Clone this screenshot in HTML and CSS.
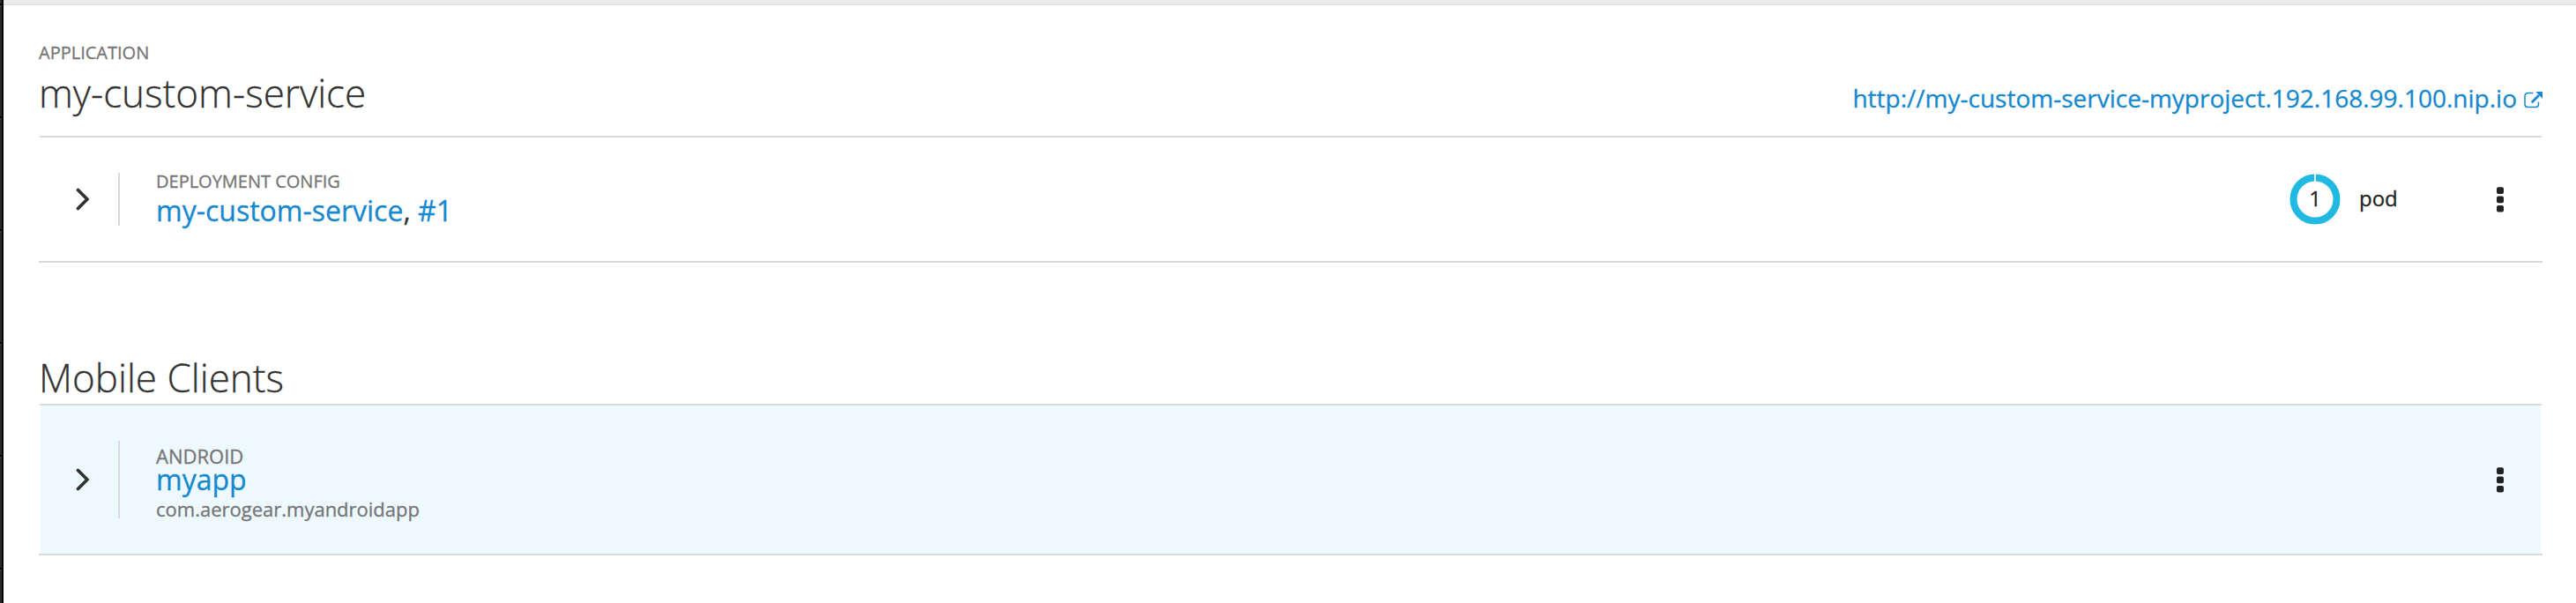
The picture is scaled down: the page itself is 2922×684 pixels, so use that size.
FILE: index.html
```html
<!DOCTYPE html>
<html lang="en">
<head>
<meta charset="utf-8">
<title>Overview</title>
<link rel="stylesheet" href="styles.css">
</head>
<body>
<div class="shell">
  <nav class="rail"></nav>
  <div class="page">
    <div class="topbar"></div>
    <main class="content">
      <header class="app-header">
        <div class="app-name">
          <div class="label">APPLICATION</div>
          <h2 class="title">my-custom-service</h2>
        </div>
        <a class="route"><span class="route-text">http://my-custom-service-myproject.192.168.99.100.nip.io</span><svg class="external" viewBox="0 0 21 19"><path d="M10.500 1.500H4.200A3.200 3.200 0 0 0 1 4.700V14.300A3.200 3.200 0 0 0 4.200 17.500H13.300A3.200 3.200 0 0 0 16.500 14.300V11.500" fill="none" stroke="currentColor" stroke-width="1.500"/><path d="M8.800 12.200L17 4" fill="none" stroke="currentColor" stroke-width="2.800"/><path d="M13.300 0H21V7.700Z" fill="currentColor"/></svg></a>
      </header>
      <section class="row row-deploy">
        <svg class="chevron" viewBox="0 0 16 26"><path d="M2.500 2.500L13 13L2.500 23.500"/></svg>
        <div class="details">
          <div class="label">DEPLOYMENT CONFIG</div>
          <div class="name"><a>my-custom-service</a>, <a>#1</a></div>
        </div>
        <div class="pods">
          <div class="donut">
            <svg viewBox="0 0 58 58"><circle cx="29" cy="29" r="24.500" fill="none" stroke="#1fb9e2" stroke-width="8"/><rect x="28.100" y="0" width="1.800" height="9" fill="#fff"/></svg>
            <span class="count">1</span>
          </div>
          <span class="pod-label">pod</span>
        </div>
        <svg class="kebab" viewBox="0 0 8 29"><rect y="0.300" width="8" height="7.700" rx="2"/><rect y="10.600" width="8" height="7.700" rx="2"/><rect y="20.900" width="8" height="7.700" rx="2"/></svg>
      </section>
      <hr class="rule">
      <h2 class="title section-title">Mobile Clients</h2>
      <section class="row row-client">
        <svg class="chevron" viewBox="0 0 16 26"><path d="M2.500 2.500L13 13L2.500 23.500"/></svg>
        <div class="details">
          <div class="label">ANDROID</div>
          <div class="name"><a>myapp</a></div>
          <div class="package">com.aerogear.myandroidapp</div>
        </div>
        <svg class="kebab" viewBox="0 0 8 29"><rect y="0.300" width="8" height="7.700" rx="2"/><rect y="10.600" width="8" height="7.700" rx="2"/><rect y="20.900" width="8" height="7.700" rx="2"/></svg>
      </section>
      <hr class="rule">
    </main>
  </div>
</div>
</body>
</html>
```
FILE: styles.css
```css
* { box-sizing: border-box; }
body {
  margin: 0;
  background: #fff;
  color: #333;
  font-family: "Open Sans", "Noto Sans", sans-serif;
  -webkit-text-stroke: 0.3px currentColor;
}
a { color: #1688ce; }
.shell { display: flex; height: 684px; overflow: hidden; }
.rail {
  flex: 0 0 4px;
  border-right: 2px solid #030303;
  background: repeating-linear-gradient(#030303 0 2px, #34383b 2px 4px, #292c2f 4px 128px);
  background-position: 0 4px;
}
.page { flex: 1; min-width: 0; }
.topbar { height: 6px; background: #ececec; border-bottom: 2px solid #e2e2e2; }
.content { padding: 0 38px 0 40px; }
.app-header {
  display: flex;
  justify-content: space-between;
  height: 148px;
  padding-top: 40px;
}
.label { font-size: 20px; line-height: 28px; color: #757575; white-space: nowrap; }
.title {
  margin: 0;
  font-size: 44px;
  font-weight: 300;
  line-height: 48px;
  white-space: nowrap;
}
.app-name .title { margin-top: 7px; }
.route { display: flex; align-items: flex-start; padding-top: 45px; }
.route-text { font-size: 28px; line-height: 40px; white-space: nowrap; }
.external { width: 21px; height: 19px; margin: 13px 0 0 8px; }
.row {
  display: flex;
  align-items: center;
  border: 2px solid transparent;
  border-top-color: #dadada;
  border-bottom: 0;
}
.rule { height: 2px; margin: 0; border: 0; background: #dadada; }
.row-deploy { height: 142px; }
.chevron { width: 16px; height: 26px; margin-left: 40px; }
.chevron path {
  fill: none;
  stroke: #333;
  stroke-width: 3.8;
  stroke-linecap: round;
  stroke-linejoin: round;
}
.details {
  flex: 1;
  height: 60px;
  margin-left: 32px;
  padding-left: 41px;
  border-left: 2px solid #dadada;
}
.name { font-size: 32px; line-height: 40px; white-space: nowrap; }
.row-deploy .label { margin-top: -4px; }
.row-deploy .name { line-height: 38px; }
.pods { display: flex; align-items: center; width: 235px; color: #222; }
.donut { display: grid; width: 58px; height: 58px; place-items: center; }
.donut > * { grid-area: 1 / 1; }
.donut svg { width: 58px; height: 58px; }
.count { font-size: 24px; line-height: 32px; margin-bottom: 2px; }
.pod-label { margin: 0 0 2px 21px; font-size: 24px; line-height: 32px; }
.kebab { width: 8px; height: 29px; margin-right: 42px; fill: #222; }
.section-title { margin-top: 106px; height: 54px; }
.row-client { height: 170px; background: #edf8ff; background-clip: padding-box; }
.row-client .details { height: 88px; }
.row-client .label { font-size: 22px; line-height: 28px; margin-top: 3px; }
.row-client .name { line-height: 26px; }
.package { font-size: 22px; line-height: 40px; color: #757575; }
```
